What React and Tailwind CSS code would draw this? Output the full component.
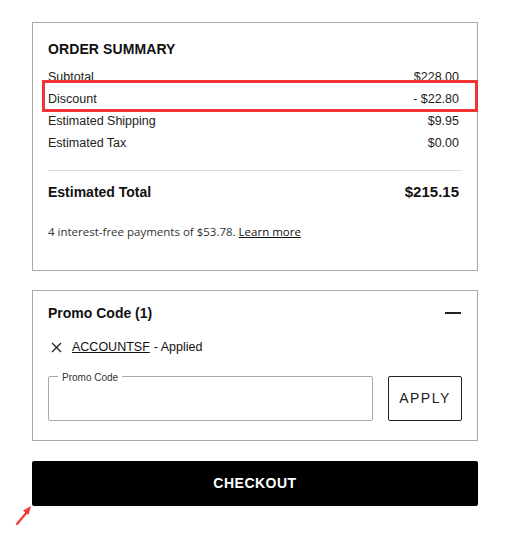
import React from 'react';

const rows = [
  { label: 'Subtotal', value: '$228.00' },
  { label: 'Discount', value: '- $22.80' },
  { label: 'Estimated Shipping', value: '$9.95' },
  { label: 'Estimated Tax', value: '$0.00' },
];

const App = () => {
  return (
    <div className="relative w-[515px] h-[539px] bg-white text-[#111] font-['Liberation_Sans',Arial,sans-serif]">
      <div className="pt-[22px] pl-[32px] w-[478px] flex flex-col">
        {/* Order summary */}
        <div className="border border-[#a9a9a9] px-[15px] pt-[15px] pb-[30px]">
          <h2 className="text-[14px] font-bold leading-[22px] tracking-[0.1px]">ORDER SUMMARY</h2>
          <div className="mt-[6px] text-[12.5px] text-[#222]">
            {rows.map((r) => (
              <div key={r.label} className="flex justify-between leading-[22px] pr-[3px]">
                <span>{r.label}</span>
                <span>{r.value}</span>
              </div>
            ))}
          </div>
          <div className="mt-[16px] border-t border-[#dcdcdc]" />
          <div className="mt-[11px] flex justify-between text-[14px] font-bold leading-[20px] pr-[3px]">
            <span>Estimated Total</span>
            <span className="text-[15px]">$215.15</span>
          </div>
          <p className="mt-[22px] text-[11.5px] leading-[16px] text-[#333] font-['Open_Sans',sans-serif]">
            4 interest-free payments of $53.78.{' '}
            <a className="underline text-[#111]">Learn more</a>
          </p>
        </div>

        {/* Promo code */}
        <div className="mt-[19px] border border-[#a9a9a9] px-[15px] pt-[12px] pb-[19px]">
          <div className="flex items-center justify-between h-[20px]">
            <span className="text-[14px] font-bold">Promo Code (1)</span>
            <span className="w-[16px] h-[2px] bg-[#222] mr-[1px]" />
          </div>
          <div className="mt-[14px] flex items-center h-[20px] text-[12.5px]">
            <svg width="11" height="11" viewBox="0 0 11 11" className="ml-[3px] mr-[10px]">
              <path d="M1 1L10 10M10 1L1 10" stroke="#222" strokeWidth="1.3" fill="none" />
            </svg>
            <a className="underline">ACCOUNTSF</a>
            <span className="ml-[4px]">- Applied</span>
          </div>
          <div className="mt-[19px] flex gap-[15px]">
            <div className="relative flex-1 h-[45px] border border-[#a9a9a9] rounded-[2px]">
              <span className="absolute left-[9px] -top-[4px] bg-white px-[4px] text-[10px] leading-[10px] text-[#333]">
                Promo Code
              </span>
            </div>
            <button className="w-[74px] h-[45px] border border-[#222] rounded-[2px] text-[14px] tracking-[1.5px] text-[#222]">
              APPLY
            </button>
          </div>
        </div>

        {/* Checkout */}
        <button className="mt-[20px] h-[45px] w-full bg-black rounded-[2px] text-white text-[14px] font-bold tracking-[0.5px]">
          CHECKOUT
        </button>
      </div>

      {/* Annotations */}
      <div className="absolute left-[42px] top-[80px] w-[436px] h-[32px] border-[3px] border-[#ee3335]" />
      <svg className="absolute left-[14px] top-[504px]" width="20" height="22" viewBox="0 0 20 22">
        <path d="M3 20L13 8" stroke="#f03a3a" strokeWidth="2.2" strokeLinecap="round" />
        <path d="M17 2L9 6.5L14.5 11Z" fill="#f03a3a" />
      </svg>
    </div>
  );
};

export default App;
